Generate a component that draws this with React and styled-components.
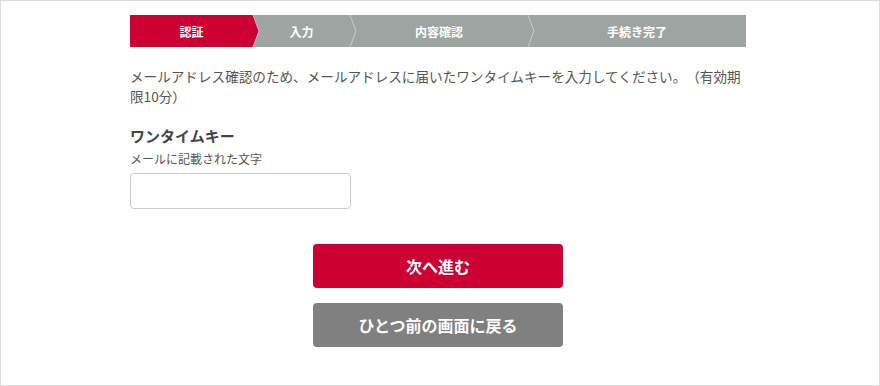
import React from 'react'
import styled, { createGlobalStyle } from 'styled-components'

const GlobalStyle = createGlobalStyle`
  body {
    margin: 0;
    font-family: "Noto Sans CJK JP", "Noto Sans", sans-serif;
    background: #fff;
    text-spacing-trim: space-all;
  }
`

const Frame = styled.div`
  box-sizing: border-box;
  width: 880px;
  height: 386px;
  border: 1px solid #dcdcdc;
  padding: 14px 0 0 129px;
`

const Content = styled.div`
  width: 616px;
`

const Steps = styled.ol`
  display: flex;
  margin: 0;
  padding: 0;
  list-style: none;
  height: 32px;
`

const Step = styled.li`
  position: relative;
  width: ${p => p.$w}px;
  display: flex;
  align-items: center;
  justify-content: center;
  background: ${p => (p.$active ? '#cc0033' : '#9ea4a2')};
  color: #fff;
  font-size: 12px;
  font-weight: 700;
  z-index: ${p => p.$z};
`

const Chevron = styled.svg`
  position: absolute;
  top: 0;
  right: -7px;
  width: 8px;
  height: 32px;
`

const Lead = styled.p`
  margin: 19px 0 0;
  font-size: 13.6px;
  line-height: 20px;
  color: #555;
`

const FieldTitle = styled.h3`
  margin: 20px 0 0;
  font-size: 15px;
  line-height: 20px;
  font-weight: 700;
  color: #444;
`

const FieldNote = styled.div`
  margin-top: 4px;
  font-size: 12px;
  line-height: 18px;
  color: #555;
`

const Input = styled.input`
  display: block;
  box-sizing: border-box;
  margin-top: 5px;
  width: 221px;
  height: 36px;
  border: 1px solid #ccc;
  border-radius: 4px;
  outline: none;
`

const Actions = styled.div`
  display: flex;
  flex-direction: column;
  align-items: center;
  gap: 15px;
  margin-top: 35px;
`

const Button = styled.button`
  width: 250px;
  height: 44px;
  border: none;
  border-radius: 4px;
  background: ${p => (p.$back ? '#808080' : '#cc0033')};
  color: #fff;
  font-family: inherit;
  font-size: 16px;
  font-weight: 700;
  cursor: pointer;
`

const steps = [
  { label: '認証', w: 123 },
  { label: '入力', w: 97 },
  { label: '内容確認', w: 178 },
  { label: '手続き完了', w: 218 },
]

const App = () => {
  return (
    <>
      <GlobalStyle />
      <Frame>
        <Content>
          <Steps>
            {steps.map((s, i) => (
              <Step key={s.label} $w={s.w} $active={i === 0} $z={10 - i}>
                {s.label}
                {i < steps.length - 1 && (
                  <Chevron viewBox="0 0 8 32">
                    {i === 0 ? (
                      <>
                        <polygon points="0,0 1,0 7,16 1,32 0,32" fill="#cc0033" />
                        <polyline points="1,0 7,16 1,32" fill="none" stroke="#e8a8b8" strokeWidth="1" />
                      </>
                    ) : (
                      <polyline points="1,0 7,16 1,32" fill="none" stroke="#c9cdcc" strokeWidth="1" />
                    )}
                  </Chevron>
                )}
              </Step>
            ))}
          </Steps>

          <Lead>
            メールアドレス確認のため、メールアドレスに届いたワンタイムキーを入力してください。（有効期限10分）
          </Lead>

          <FieldTitle>ワンタイムキー</FieldTitle>
          <FieldNote>メールに記載された文字</FieldNote>
          <Input type="text" />

          <Actions>
            <Button>次へ進む</Button>
            <Button $back>ひとつ前の画面に戻る</Button>
          </Actions>
        </Content>
      </Frame>
    </>
  )
}

export default App
